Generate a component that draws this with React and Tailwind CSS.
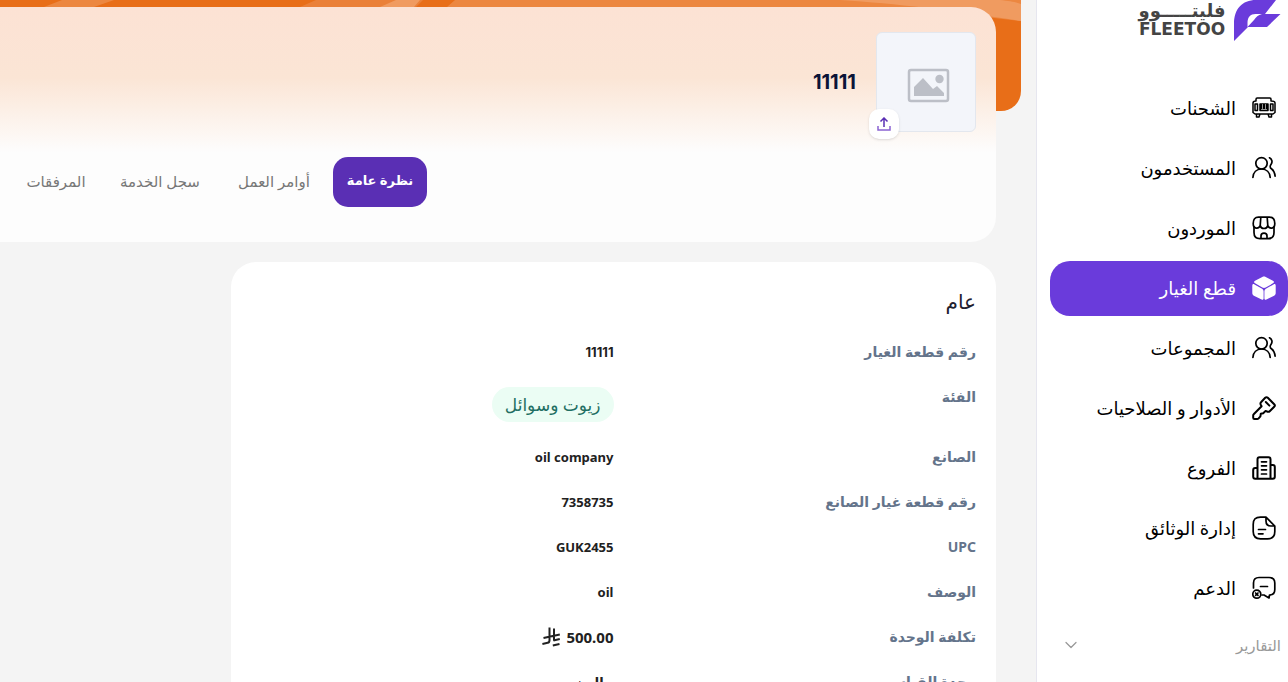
import React, { useState } from 'react';
import { ChevronDown } from 'lucide-react';

// --- SIDEBAR ICONS ---
const Icon = ({ children, strokeWidth = 1.6 }) => (
  <svg className="size-6 shrink-0" viewBox="0 0 24 24" fill="none" stroke="currentColor" strokeWidth={strokeWidth} strokeLinecap="round" strokeLinejoin="round" aria-hidden="true">
    {children}
  </svg>
);

const TruckIcon = () => (
  <Icon strokeWidth={1.5}>
    <path d="M4 5V3.2C4 2.5 4.5 2 5.2 2h12.600c.7 0 1.200.5 1.200 1.200V5M4 5c-1.800 0-3 .6-3 2v9.500l2 1.500h18l2-1.500V7c0-1.400-1.200-2-4-2M4.500 18.500v2.500h2.500l.8-2.500M16.200 18.500l.8 2.500h2.500v-2.500M3 8h2.500v6.500H3zM18.500 8H21v6.500h-2.500z" />
    <path d="M8 8h8v6.500H8z" fill="currentColor" />
    <path d="M10.500 8.500v4M13.500 8.500v4M9.500 13.500h5" stroke="white" strokeWidth="0.600" />
  </Icon>
);

const UsersIcon = () => (
  <Icon strokeWidth={1.7}>
    <circle cx="9.500" cy="7.300" r="5.700" />
    <path d="M.9 21.500c.3-5.300 3.700-8.500 8.600-8.500s8.400 3.200 8.700 8.500M17.500 1.800c2.600 1.600 3.200 4 1.600 6.500-1.400 2-1.400 3.300.6 4.700 2 1.500 3 3.500 3.400 7.200" />
  </Icon>
);

const StoreIcon = () => (
  <Icon strokeWidth={1.700}>
    <path d="M6.500 1.200h11c3.500 0 5.300 2 5.300 6.300 0 5.500-5.300 6-7 2-.8 4-6.800 4-7.600 0-1.700 4-7 3.500-7-2 0-4.300 1.800-6.300 5.300-6.300zM8.800 1.500 8.200 9.500M15.200 1.500l.6 8" />
    <path d="M2 11v5.500c0 4 2 6.200 6 6.200h8c4 0 6-2.200 6-6.200V11M9 22.500V20c0-3.800 6-3.800 6 0v2.500" />
  </Icon>
);

const CubeIcon = () => (
  <svg className="size-6 shrink-0" viewBox="0 0 24 24" fill="currentColor" aria-hidden="true">
    <path d="M10.300.9c1-.6 2.400-.6 3.400 0l6.800 3.600c2 1.200 2 1.900 0 3.100l-6.800 3.900c-1 .6-2.400.6-3.400 0L3.500 7.600c-2-1.200-2-1.900 0-3.100z" />
    <path d="M.3 9.700c0-1.500.9-2 2.200-1.300l7.200 4.100c1.100.6 1.900 1.700 1.900 2.900v6.900c0 1.400-.9 1.800-2 1.200l-7.200-3.600C1 19.200.3 18.200.3 16.900z" />
    <path d="M23.700 9.700c0-1.500-.9-2-2.200-1.300l-7.200 4.100c-1.100.6-1.900 1.700-1.900 2.900v6.900c0 1.400.9 1.800 2 1.200l7.200-3.600c1.400-.7 2.100-1.700 2.100-3z" />
  </svg>
);

const KeyIcon = () => (
  <Icon strokeWidth={2}>
    <path d="M13.200 1.800c.8-.8 1.800-.8 2.600 0l6.400 6.400c.8.800.8 1.800 0 2.600l-4.500 4.500c-.6.600-1.300.7-2.100.4l-2-.8-2.400 2.400-2.400.4-.4 2.600-2 2.300c-.3.300-.7.400-1.100.4H2.500c-.8 0-1.300-.5-1.300-1.300v-2.200c0-.5.100-.9.500-1.200L9.600 10.200l-1-1.800c-.3-.8-.2-1.500.4-2.100zM13.800 6l3.600 3.600" />
  </Icon>
);

const BuildingIcon = () => (
  <Icon strokeWidth={2}>
    <path d="M5.500 22.800V3.200c0-1.200.8-2 2-2h9c1.200 0 2 .8 2 2v19.600M5.500 12H3.200c-1.200 0-2 .8-2 2v6.800c0 1.200.8 2 2 2h17.600c1.200 0 2-.8 2-2V11c0-1.200-.8-2-2-2h-2.300" />
    <path d="M9.500 5.800h5M9.500 9.800h5M9.500 13.800h5M9.500 18h5" strokeWidth="1.700" />
  </Icon>
);

const DocumentIcon = () => (
  <Icon strokeWidth={1.7}>
    <path d="M14 1.200H8.500C3 1.200 1.200 3.500 1.200 8.500v7c0 5 2.300 7.300 7.300 7.300h7c5 0 7.300-2.300 7.300-7.300V10zM14 1.200V5c0 3.500 1.500 5 5 5h3.800M6.500 13.500h7M6.500 17.800h4.500" />
  </Icon>
);

const SupportIcon = () => (
  <Icon strokeWidth={1.7}>
    <path d="M1.500 12V7c0-3.500 2-5.500 5.500-5.500h10c3.500 0 5.800 2 5.800 5.500v6.500c0 3.500-2.300 5.500-5.300 5.500l-.5 3-5-3h-2M8.500 10.500h7" />
    <circle cx="4.800" cy="18.200" r="4" />
    <path d="m3.600 17 2.400 2.400M6 17l-2.400 2.400" />
  </Icon>
);

const RiyalIcon = () => (
  <svg className="h-5 w-[18px]" viewBox="0 0 18 20" fill="none" stroke="currentColor" strokeWidth="2" role="img" aria-label="ريال">
    <path d="M7.500.5v12.700c0 1.600-.5 2.300-1.800 2.600L.4 17M12 1.500v12.300M1.500 11l16.300-3.600M11.500 13.400l6.300-1.400M10.800 18.400l6.700-1.500" />
  </svg>
);

const NAV_ITEMS = [
  { id: 'shipments', label: 'الشحنات', icon: TruckIcon },
  { id: 'users', label: 'المستخدمون', icon: UsersIcon },
  { id: 'vendors', label: 'الموردون', icon: StoreIcon },
  { id: 'parts', label: 'قطع الغيار', icon: CubeIcon },
  { id: 'groups', label: 'المجموعات', icon: UsersIcon },
  { id: 'roles', label: 'الأدوار و الصلاحيات', icon: KeyIcon },
  { id: 'branches', label: 'الفروع', icon: BuildingIcon },
  { id: 'documents', label: 'إدارة الوثائق', icon: DocumentIcon },
  { id: 'support', label: 'الدعم', icon: SupportIcon },
];

const TABS = [
  { id: 'overview', label: 'نظرة عامة', width: 'w-[94px]' },
  { id: 'orders', label: 'أوامر العمل', width: 'w-[102px]' },
  { id: 'history', label: 'سجل الخدمة', width: 'w-[110px]' },
  { id: 'attachments', label: 'المرفقات', width: 'w-[82px]' },
];

const DETAILS = [
  { label: 'رقم قطعة الغيار', value: '11111' },
  { label: 'الفئة', value: 'زيوت وسوائل', badge: true },
  { label: 'الصانع', value: 'oil company' },
  { label: 'رقم قطعة غيار الصانع', value: '7358735' },
  { label: 'UPC', value: 'GUK2455' },
  { label: 'الوصف', value: 'oil' },
  { label: 'تكلفة الوحدة', value: '500.00', currency: true },
  { label: 'وحدة القياس', value: 'جالون' },
];

// --- LOGO ---
const Logo = () => (
  <div className="flex h-[41px] items-start gap-[7px] pr-[7px]">
    <svg className="h-[41px] w-[47px]" viewBox="0 0 47 41" aria-hidden="true">
      <path d="M0 41V24C0 9 8 0 22 0h20L31 14h15.500L33 27H14z" fill="#6a3bdb" />
      <path d="M13.500 27v-4c0-6 3-9 8-9H28c-4 1-6 3-8 6z" fill="white" />
    </svg>
    <div className="flex w-[90px] flex-col items-center text-[#444444]">
      <span className="text-lg leading-5 font-bold">فليتـــــوو</span>
      <span className="font-['DejaVu_Sans'] text-[17px] leading-[18px] font-bold" dir="ltr">FLEETOO</span>
    </div>
  </div>
);

const Sidebar = ({ active, onSelect }) => (
  <aside className="w-[252px] shrink-0 border-l border-[#e6e6ef] bg-white">
    <Logo />
    <nav className="mt-10 flex flex-col gap-[5px] pl-[13px]">
      {NAV_ITEMS.map(({ id, label, icon: NavIcon }) => (
        <a
          key={id}
          href={`#${id}`}
          onClick={() => onSelect(id)}
          className={
            active === id
              ? 'flex h-[55px] items-center gap-4 rounded-[20px] bg-[#6a3bdb] pr-3 pb-0.5 text-lg leading-6 text-white'
              : 'flex h-[55px] items-center gap-4 rounded-[20px] pr-3 pb-0.5 text-lg leading-6 text-black'
          }
        >
          <NavIcon />
          <span>{label}</span>
        </a>
      ))}
    </nav>
    <button type="button" className="mt-[9px] flex h-10 w-full items-center justify-between pr-[7px] pl-6 text-[15px] text-[#999999]">
      <span>التقارير</span>
      <ChevronDown className="size-5" strokeWidth={1.5} />
    </button>
  </aside>
);

// --- ORANGE BANNER BEHIND THE HEADER ---
const Banner = () => (
  <div className="absolute inset-y-0 right-[15px] left-0 h-[111px] overflow-hidden rounded-br-[20px] bg-[#e86e18]">
    <svg className="h-full w-full" viewBox="0 0 1021 111" preserveAspectRatio="none" aria-hidden="true">
      <path d="M44 7 62 0h52L94 7z" fill="#ec8740" />
      <path d="M300 7 316 0h107l-7 7z" fill="#ea8038" />
      <path d="M380 7 396 0h24l-6 7z" fill="#f09b60" />
      <path d="M447 7 455 0h566v21L960 14z" fill="#ec8740" />
      <path d="M840 0c60 4 110 10 181 21V0z" fill="#f09b60" />
      <path d="M1000 0c10 1 15 2 21 4V0z" fill="#ec8740" />
    </svg>
  </div>
);

const PartHeader = () => {
  const [tab, setTab] = useState('overview');

  return (
    <header className="relative pt-[7px]">
      <Banner />
      <div className="relative mr-10 rounded-r-[25px] bg-[#fdfdfd] bg-linear-to-b from-[#fce2d4] from-0% via-[#fbe5d5] via-30% to-[#fdfdfd] to-62% pt-[25px] pb-[35px]">
        <div className="flex items-center gap-5 pr-5">
          <div className="relative size-[100px] rounded-md border border-[#e3e7ee] bg-[#f3f5fa]">
            <svg className="size-full" viewBox="0 0 98 98" aria-hidden="true">
              <rect x="32" y="37" width="39" height="31" rx="2" fill="none" stroke="#bcbfc7" strokeWidth="2.500" />
              <path d="M37 63v-9l9-9 10 11 4-3 7 7v3z" fill="#bcbfc7" />
              <circle cx="62.500" cy="46" r="4.200" fill="#bcbfc7" />
            </svg>
            <button type="button" aria-label="رفع صورة" className="absolute -bottom-2 -left-2 flex size-[30px] items-center justify-center rounded-[10px] bg-white shadow-sm">
              <svg className="size-[14px]" viewBox="0 0 14 14" fill="none" strokeWidth="1.500" aria-hidden="true">
                <path d="M7 10V1M3.500 4.500 7 1l3.500 3.500" stroke="#5a2fb4" />
                <path d="M1 9v4h12V9" stroke="#8a63d2" />
              </svg>
            </button>
          </div>
          <h1 className="font-['Inter'] text-xl font-bold text-[#0b1437]">11111</h1>
        </div>
        <div role="tablist" className="mt-[25px] flex justify-end gap-2 pl-[15px]">
          {TABS.map(({ id, label, width }) => (
            <button
              key={id}
              type="button"
              role="tab"
              aria-selected={tab === id}
              onClick={() => setTab(id)}
              className={
                tab === id
                  ? `${width} h-[50px] rounded-[15px] bg-[#5a2fb4] pb-0.5 text-[13px] font-bold whitespace-nowrap text-white`
                  : `${width} h-[50px] rounded-[15px] pb-0.5 text-[15px] whitespace-nowrap text-[#777777]`
              }
            >
              {label}
            </button>
          ))}
        </div>
      </div>
    </header>
  );
};

const DetailValue = ({ value, badge, currency }) => {
  if (badge) {
    return <span className="rounded-full bg-[#ebfdf4] px-[13px] text-[17px] leading-[35px] font-normal text-[#1f6f63]">{value}</span>;
  }
  if (currency) {
    return (
      <>
        <span className="text-[15px] leading-5">{value}</span>
        <RiyalIcon />
      </>
    );
  }
  return <span className={value === '11111' ? "font-['Inter']" : undefined}>{value}</span>;
};

const DetailsCard = () => (
  <section className="mt-5 mr-10 ml-[231px] rounded-[25px] bg-white p-5">
    <h2 className="text-xl leading-10 text-[#1f2130]">عام</h2>
    <dl className="mt-5 flex flex-col gap-[25px] text-[13px] leading-5 font-bold">
      {DETAILS.map(({ label, ...detail }) => (
        <div key={label} className="grid grid-cols-2">
          <dt className="text-sm leading-5 text-[#64748b]">{label}</dt>
          <dd className="flex items-center gap-[6px] text-[#212121]">
            <DetailValue {...detail} />
          </dd>
        </div>
      ))}
    </dl>
  </section>
);

function App() {
  const [active, setActive] = useState('parts');

  return (
    <div dir="rtl" className="flex h-screen overflow-hidden bg-[#f4f4f4] font-['Noto_Sans','DejaVu_Sans',sans-serif]">
      <Sidebar active={active} onSelect={setActive} />
      <main className="min-w-0 flex-1">
        <PartHeader />
        <DetailsCard />
      </main>
    </div>
  );
}

export default App;
